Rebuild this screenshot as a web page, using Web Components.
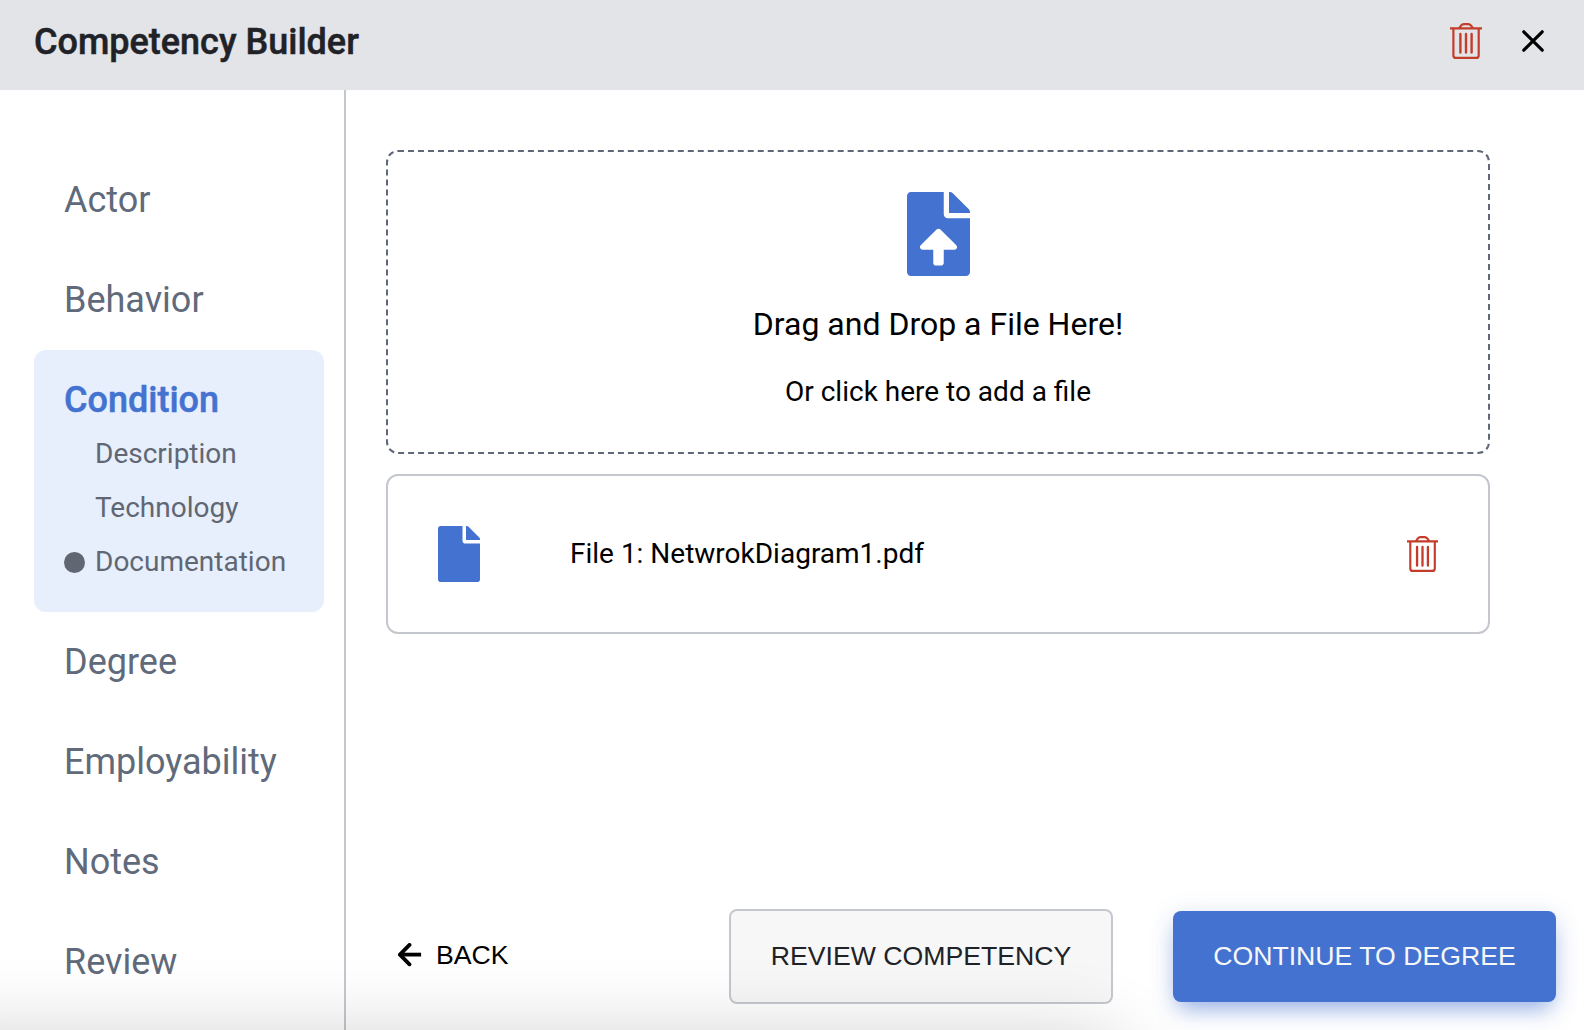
<!DOCTYPE html>
<html lang="en">
<head>
<meta charset="utf-8">
<title>Competency Builder</title>
<style>
html,body{margin:0;height:100%;overflow:hidden;background:#fff}
body{font-family:Roboto,"Liberation Sans",sans-serif;font-size:28px;color:#000}
</style>
</head>
<body>
<competency-builder></competency-builder>
<script>
function define(name, html) {
  const t = document.createElement('template');
  t.innerHTML = html;
  customElements.define(name, class extends HTMLElement {
    constructor() {
      super();
      this.attachShadow({mode: 'open'}).append(t.content.cloneNode(true));
    }
  });
}

define('trash-icon', `
<style>:host{display:block;width:32px;height:36px}svg{display:block;overflow:visible}</style>
<svg width="100%" height="100%" viewBox="0 0 32 36" preserveAspectRatio="none" fill="none" stroke="#c43d2b" stroke-width="2.2">
<path d="M0 5.4H32M3.4 5.4V32.4Q3.4 34.9 6 34.9H26Q28.7 34.9 28.7 32.4V5.4M9.2 5.2L11.4 2.2Q12.3 1.1 13.8 1.1H18.4Q19.8 1.1 20.7 2.2L23 5.2"/>
<path stroke-width="2.4" stroke-linecap="round" d="M10.4 11V29.6M16 11V29.6M21.6 11V29.6"/></svg>`);

define('close-icon', `
<style>:host{display:block}svg{display:block}</style>
<svg width="22" height="22" viewBox="0 0 22 22" stroke="#000" stroke-width="3.2" stroke-linecap="round"><path d="M1.8 1.8L20.2 20.2M20.2 1.8L1.8 20.2"/></svg>`);

define('file-icon', `
<style>:host{display:block;width:42px;height:56px}svg{display:block}</style>
<svg width="100%" height="100%" viewBox="0 0 384 512" fill="#4472d0"><path d="M224 136V0H24C10.7 0 0 10.7 0 24v464c0 13.3 10.7 24 24 24h336c13.3 0 24-10.7 24-24V160H248c-13.2 0-24-10.8-24-24zm160-14.1v6.1H256V0h6.1c6.4 0 12.5 2.5 17 7l97.9 98c4.5 4.5 7 10.6 7 16.9z"/></svg>`);

define('upload-icon', `
<style>:host{display:block;width:63px;height:84px}svg{display:block}</style>
<svg width="100%" height="100%" viewBox="0 0 384 512" fill="#4472d0"><path d="M224 136V0H24C10.7 0 0 10.7 0 24v464c0 13.3 10.7 24 24 24h336c13.3 0 24-10.7 24-24V160H248c-13.2 0-24-10.8-24-24zm65.18 216.01H224v80c0 8.84-7.16 16-16 16h-32c-8.84 0-16-7.16-16-16v-80H94.82c-14.28 0-21.41-17.29-11.27-27.36l96.42-95.7c6.65-6.61 17.39-6.61 24.04 0l96.42 95.7c10.15 10.07 3.03 27.36-11.25 27.36zM377 105L279.1 7c-4.5-4.5-10.6-7-17-7H256v128h128v-6.1c0-6.3-2.5-12.4-7-16.9z"/></svg>`);

define('builder-header', `
<style>
:host{display:flex;align-items:center;box-sizing:border-box;height:90px;flex:none;background:#e3e4e8;padding:0 40px 8px 34px}
h1{margin:0;flex:1;font-size:36px;font-weight:500;-webkit-text-stroke:.5px #212227;line-height:42px;padding-top:2px;color:#212227}
close-icon{margin-left:40px}
</style>
<h1><slot></slot></h1><trash-icon></trash-icon><close-icon></close-icon>`);

define('nav-item', `
<style>:host{display:block;line-height:100px;font-size:36px;color:#606a7a;padding-left:30px}</style><slot></slot>`);

define('nav-sub', `
<style>
:host{display:flex;align-items:center;height:54px;font-size:28px;color:#606773}
i{width:21px;height:21px;border-radius:50%;margin-right:10px;flex:none}
span{padding-bottom:2px}
:host([current]) i{background:#606773}
</style><i></i><span><slot></slot></span>`);

define('nav-group', `
<style>
:host{display:block;box-sizing:border-box;height:262px;background:#e7effd;border-radius:12px;padding:27px 0 0 30px}
.h{font-size:36px;line-height:46px;font-weight:500;-webkit-text-stroke:.5px #4472d0;color:#4472d0;margin-bottom:4px}
</style><div class="h"><slot name="title"></slot></div><slot></slot>`);

define('side-nav', `
<style>:host{display:block;box-sizing:border-box;width:346px;flex:none;border-right:2px solid #c4c8ce;padding:60px 20px 0 34px}</style><slot></slot>`);

define('drop-zone', `
<style>
:host{display:flex;flex-direction:column;align-items:center;box-sizing:border-box;height:304px;border:2px dashed #5f6878;border-radius:12px;padding-top:40px}
.a{font-size:32px;line-height:40px;margin-top:28px}
.b{font-size:28px;line-height:34px;margin-top:31px}
</style><upload-icon></upload-icon><div class="a"><slot name="title"></slot></div><div class="b"><slot></slot></div>`);

define('file-row', `
<style>
:host{display:flex;align-items:center;box-sizing:border-box;height:160px;margin-top:20px;border:2px solid #c4c8ce;border-radius:12px;padding:0 50px}
.n{flex:1;margin-left:90px;padding-bottom:2px}
trash-icon{width:31px}
</style><file-icon></file-icon><div class="n"><slot></slot></div><trash-icon></trash-icon>`);

define('action-button', `
<style>
:host{display:flex;align-items:center;justify-content:center;box-sizing:border-box;padding-bottom:3px;font:26.667px/30px "Liberation Sans",Arial,sans-serif;border-radius:8px;white-space:nowrap}
:host([kind=back]){color:#000;gap:14px}
:host([kind=outline]){width:384px;height:95px;padding-bottom:2px;background:#f7f7f7;border:2px solid #c4c8ce;color:#212227}
:host([kind=primary]){width:383px;height:91px;padding-bottom:2px;background:#4472d0;color:#f7f7f7;box-shadow:0 12px 22px -6px rgba(68,114,208,.5),0 4px 26px rgba(68,114,208,.16)}
svg{display:none}
:host([kind=back]) svg{display:block}
</style><svg width="24" height="24" viewBox="0 0 24 24" fill="none" stroke="#000" stroke-width="3.8" stroke-linejoin="round"><path stroke-linecap="round" d="M11.5 1.9L1.9 11.6L11.5 21.3"/><path d="M1.9 11.6H23.1"/></svg><slot></slot>`);

define('action-bar', `
<style>:host{display:flex;align-items:center;margin-top:auto;padding-left:12px;margin-right:28px;height:95px;margin-bottom:26px}
::slotted([kind=outline]){margin-left:auto}
::slotted([kind=primary]){margin-left:60px}</style><slot></slot>`);

define('competency-builder', `
<style>
:host{display:flex;flex-direction:column;height:1030px;width:1584px;position:relative;overflow:hidden}
.body{display:flex;flex:1;min-height:0}
main{flex:1;display:flex;flex-direction:column;padding:60px 0 0 40px}
.files{margin-right:94px}
.shade{position:absolute;left:-100px;top:1031px;width:1230px;height:120px;border-radius:50px;box-shadow:0 0 76px rgba(0,0,0,.165);pointer-events:none}
action-button[kind=primary]{z-index:1}
</style>
<builder-header>Competency Builder</builder-header>
<div class="body">
<side-nav>
<nav-item>Actor</nav-item><nav-item>Behavior</nav-item>
<nav-group><span slot="title">Condition</span><nav-sub>Description</nav-sub><nav-sub>Technology</nav-sub><nav-sub current>Documentation</nav-sub></nav-group>
<nav-item>Degree</nav-item><nav-item>Employability</nav-item><nav-item>Notes</nav-item><nav-item>Review</nav-item>
</side-nav>
<main>
<div class="files">
<drop-zone><span slot="title">Drag and Drop a File Here!</span>Or click here to add a file</drop-zone>
<file-row>File 1: NetwrokDiagram1.pdf</file-row>
</div>
<action-bar>
<action-button kind="back">BACK</action-button>
<action-button kind="outline">REVIEW COMPETENCY</action-button>
<action-button kind="primary">CONTINUE TO DEGREE</action-button>
</action-bar>
</main>
</div>
<div class="shade"></div>`);
</script>
</body>
</html>
